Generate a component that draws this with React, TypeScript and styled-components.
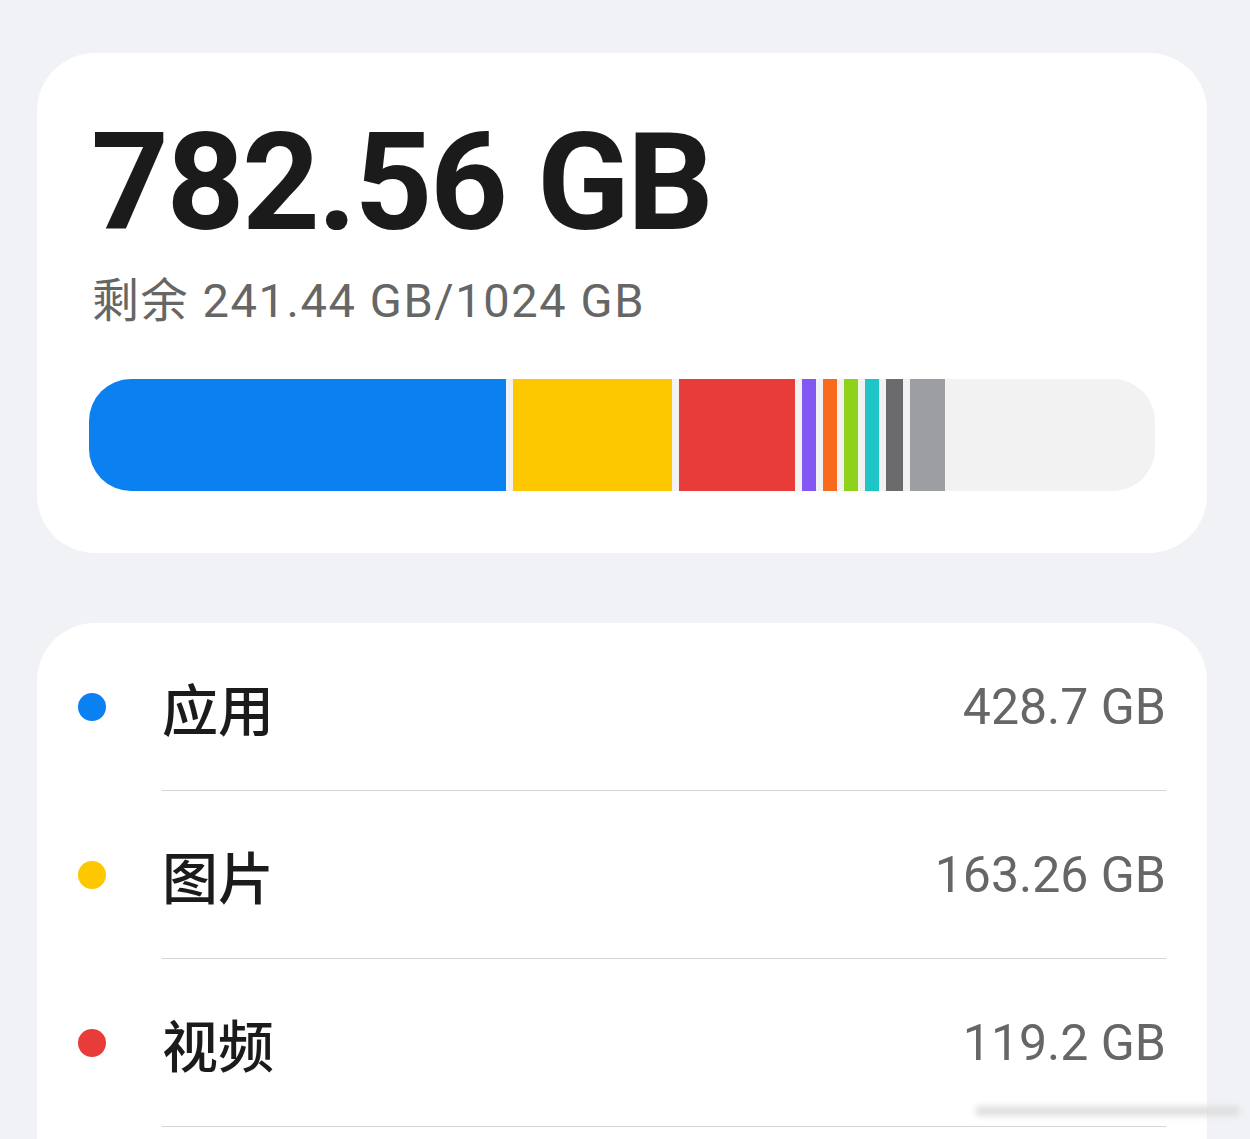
import React from 'react'
import styled, { createGlobalStyle } from 'styled-components'

const GlobalStyle = createGlobalStyle`
  html, body {
    margin: 0;
    padding: 0;
    background: #f1f2f6;
    font-family: Roboto, "Noto Sans CJK SC", sans-serif;
  }
`

const Page = styled.div`
  position: relative;
  display: flex;
  flex-direction: column;
  gap: 70px;
  padding: 53px 43px 0 37px;
  height: 1139px;
  box-sizing: border-box;
  overflow: hidden;
`

const Card = styled.section`
  flex: none;
  background: #ffffff;
  border-radius: 58px;
`

const SummaryCard = styled(Card)`
  padding: 62px 52px 62px 52px;
`

const Total = styled.div`
  font-size: 136px;
  line-height: 1;
  font-weight: 700;
  color: #1b1b1b;
  letter-spacing: -2.5px;
  padding-left: 2px;
`

const Remaining = styled.div`
  margin-top: 26px;
  font-size: 47px;
  line-height: 1;
  color: #666666;
  letter-spacing: 1.6px;
  padding-left: 3px;
`

const Track = styled.div`
  margin-top: 55px;
  height: 112px;
  display: flex;
  gap: 7px;
  background: #f2f2f2;
  border-radius: 42px;
  overflow: hidden;
`

const Segment = styled.div<{ $color: string }>`
  flex: none;
  height: 100%;
  background: ${({ $color }) => $color};
`

const ListCard = styled(Card)`
  padding: 0 41px 80px 41px;
`

const Row = styled.div`
  display: flex;
  align-items: center;
  gap: 56px;
`

const Dot = styled.span<{ $color: string }>`
  flex: none;
  width: 28px;
  height: 28px;
  border-radius: 50%;
  background: ${({ $color }) => $color};
`

const RowBody = styled.div`
  flex: 1;
  height: 167px;
  display: flex;
  align-items: center;
  justify-content: space-between;
  border-bottom: 1px solid #d4d4d6;
`

const Label = styled.span`
  font-family: "Noto Sans CJK SC", sans-serif;
  font-size: 56px;
  font-weight: 500;
  color: #1b1b1b;
`

const Size = styled.span`
  font-size: 50px;
  color: #666666;
`

const Watermark = styled.div`
  position: absolute;
  right: 10px;
  top: 1106px;
  width: 265px;
  height: 10px;
  border-radius: 5px;
  background: #dcdcdc;
  filter: blur(3px);
  opacity: 0.9;
`

const segments = [
  { color: '#0b81f1', width: 417 },
  { color: '#fec800', width: 159 },
  { color: '#e83c3a', width: 116 },
  { color: '#8357f1', width: 14 },
  { color: '#f96a1d', width: 14 },
  { color: '#8fd21b', width: 14 },
  { color: '#1fc5c7', width: 14 },
  { color: '#6b6b6d', width: 17 },
  { color: '#9d9ea1', width: 35 }
]

const categories = [
  { name: '应用', size: '428.7 GB', color: '#0b81f1' },
  { name: '图片', size: '163.26 GB', color: '#fec800' },
  { name: '视频', size: '119.2 GB', color: '#e83c3a' }
]

export default function App() {
  return (
    <>
      <GlobalStyle />
      <Page>
        <SummaryCard>
          <Total>782.56 GB</Total>
          <Remaining>剩余 241.44 GB/1024 GB</Remaining>
          <Track>
            {segments.map((s, i) => (
              <Segment key={i} $color={s.color} style={{ width: s.width }} />
            ))}
          </Track>
        </SummaryCard>

        <ListCard>
          {categories.map((c) => (
            <Row key={c.name}>
              <Dot $color={c.color} />
              <RowBody>
                <Label>{c.name}</Label>
                <Size>{c.size}</Size>
              </RowBody>
            </Row>
          ))}
        </ListCard>
        <Watermark />
      </Page>
    </>
  )
}
